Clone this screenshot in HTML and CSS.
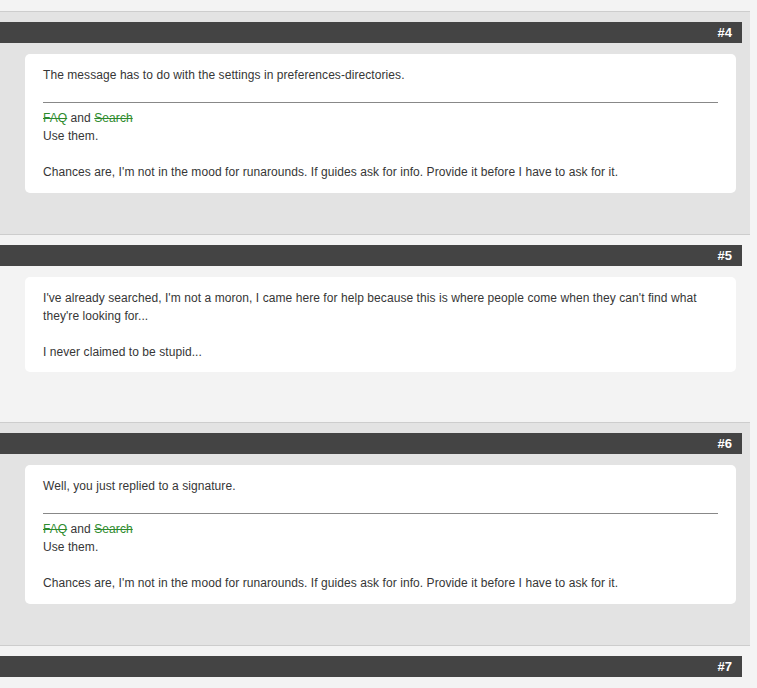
FILE: index.html
```html
<!DOCTYPE html>
<html lang="en">
<head>
    <meta charset="UTF-8">
    <title>Thread</title>
    <link rel="stylesheet" href="styles.css">
</head>
<body>
    <div class="thread">
        <!-- tail of the previous post -->
        <div class="post post-light post-tail"></div>

        <div class="post post-dark">
            <div class="post-bar"><span class="post-num">#4</span></div>
            <div class="post-card">
                <div class="message">The message has to do with the settings in preferences-directories.</div>
                <div class="signature">
                    <a href="#" class="sig-link">FAQ</a> and <a href="#" class="sig-link">Search</a><br>
                    Use them.<br>
                    <br>
                    Chances are, I'm not in the mood for runarounds. If guides ask for info. Provide it before I have to ask for it.
                </div>
            </div>
        </div>

        <div class="post post-light post-nosig">
            <div class="post-bar"><span class="post-num">#5</span></div>
            <div class="post-card">
                <div class="message">I've already searched, I'm not a moron, I came here for help because this is where people come when they can't find what they're looking for...<br>
                    <br>
                    I never claimed to be stupid...</div>
            </div>
        </div>

        <div class="post post-dark">
            <div class="post-bar"><span class="post-num">#6</span></div>
            <div class="post-card">
                <div class="message">Well, you just replied to a signature.</div>
                <div class="signature">
                    <a href="#" class="sig-link">FAQ</a> and <a href="#" class="sig-link">Search</a><br>
                    Use them.<br>
                    <br>
                    Chances are, I'm not in the mood for runarounds. If guides ask for info. Provide it before I have to ask for it.
                </div>
            </div>
        </div>

        <div class="post post-light">
            <div class="post-bar"><span class="post-num">#7</span></div>
        </div>
    </div>
</body>
</html>
```

FILE: styles.css
```css
* {
    box-sizing: border-box;
    margin: 0;
    padding: 0;
}

body {
    background: #f4f4f4;
    font-family: 'Liberation Sans', Arial, sans-serif;
    font-size: 12px;
    line-height: 18px;
    color: #363636;
    overflow: hidden;
}

.thread {
    width: 750px;
}

.post {
    border-top: 1px solid #cdcdcd;
    padding: 10px 0 42px;
}

.post-dark {
    background: #e3e3e3;
    padding-bottom: 41px;
}

.post-light {
    background: #f3f3f3;
}

.post-tail {
    border-top: none;
    height: 11px;
    padding: 0;
}

.post-nosig {
    padding-bottom: 50px;
}

.post-bar {
    height: 21px;
    margin-right: 8px;
    background: #444;
    display: flex;
    justify-content: flex-end;
    align-items: center;
    padding-right: 10px;
}

.post-num {
    color: #fff;
    font-weight: bold;
    font-size: 13px;
    line-height: 21px;
}

.post-card {
    background: #fff;
    border-radius: 5px;
    margin: 11px 14px 0 25px;
    padding: 12px 18px 11px;
    letter-spacing: 0.07px;
}

.signature {
    margin-top: 18px;
    border-top: 1px solid #888;
    padding-top: 6px;
    padding-bottom: 1px;
}

.sig-link {
    color: #2e8b2e;
    text-decoration: line-through;
}
```
